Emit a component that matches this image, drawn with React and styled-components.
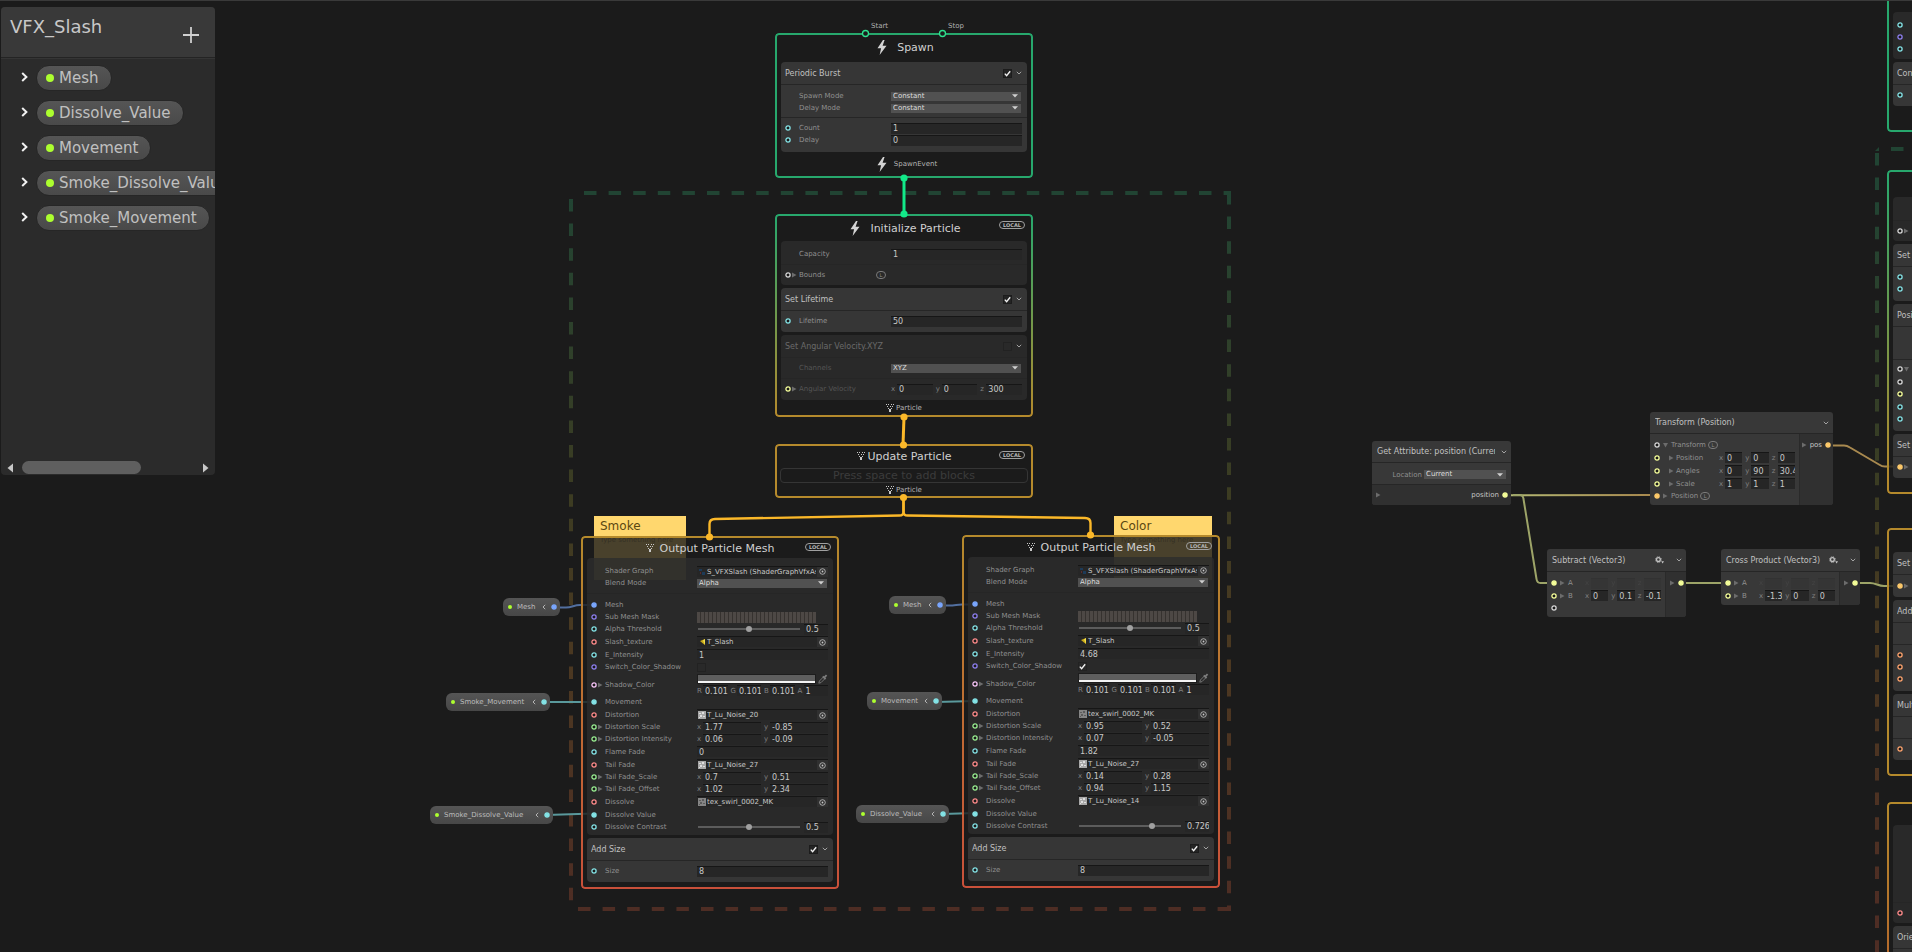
import React, { useId } from "react"
import styled, { createGlobalStyle, css } from "styled-components"

const GlobalStyle = createGlobalStyle`
* { box-sizing: border-box; }
body { margin: 0; background: #1b1b1b; }
button, input, select { font-family: inherit; margin: 0; border-radius: 0; }
`

const colors = {
    float: "#84e4e7",
    uint: "#8e7ff0",
    tex: "#ff8b8b",
    vec2: "#9aef92",
    vec3: "#f6ff9a",
    color: "#f9c6f9",
    mesh: "#7aa7ff",
    spaceable: "#ffcb6b",
    orange: "#ffa46e",
    none: "#d8d8d8",
}

const GREEN = "#27a86d"
const AMBER = "#b58a2c"

/* ---------- canvas ---------- */

const Canvas = styled.main`
position: relative;
height: 100vh;
overflow: hidden;
border-top: 1px solid #3a3a3a;
background: #1b1b1b;
color: #c4c4c4;
font-family: "DejaVu Sans", Verdana, sans-serif;
font-size: 7px;
`

const Layer = styled.svg`
position: absolute;
left: 0;
top: -1px;
width: 100%;
height: 100vh;
pointer-events: none;
`

const Note = styled.div`
position: absolute;
left: ${props => props.$x}px;
top: ${props => props.$y - 1}px;
width: ${props => props.$w}px;
height: 64px;
padding: 2px 6px;
overflow: hidden;
background: #ffd76e;
color: #5b4712;
white-space: nowrap;
`

const NoteTitle = styled.div`
font-size: 12px;
line-height: 17px;
`

const NoteText = styled.div`
font-size: 7px;
line-height: 10px;
color: #9a8240;
`

/* ---------- blackboard ---------- */

const Board = styled.aside`
position: absolute;
left: 1px;
top: 6px;
width: 214px;
height: 468px;
display: flex;
flex-direction: column;
overflow: hidden;
border-radius: 4px;
background: #2b2b2b;
`

const BoardHead = styled.header`
display: flex;
justify-content: space-between;
align-items: flex-start;
height: 51px;
padding: 8px 16px 0 9px;
background: #393939;
border-bottom: 1px solid #242424;
`

const BoardTitle = styled.h1`
margin: 0;
font-size: 18px;
line-height: 24px;
font-weight: normal;
color: #c8c8c8;
`

const IconButton = styled.button`
display: flex;
align-items: center;
justify-content: center;
flex: none;
padding: ${props => props.$pad || "0"};
border: 0;
background: none;
color: ${props => props.$color || "#c4c4c4"};
`

const BoardList = styled.ul`
flex: 1;
margin: 0;
padding: 6px 0 0 20px;
list-style: none;
display: flex;
flex-direction: column;
gap: 9px;
border-top: 1px solid #353535;
`

const BoardItem = styled.li`
display: flex;
align-items: center;
gap: 8px;
height: 26px;
white-space: nowrap;
`

const Pill = styled.button`
display: flex;
flex: none;
align-items: center;
gap: 5px;
height: 26px;
padding: 0 12px 0 9px;
border: 1px solid #262626;
border-radius: 13px;
background: linear-gradient(#555, #494949);
color: #c0c0c0;
font-size: 15px;
`

const Dot = styled.span`
flex: none;
width: ${props => props.$size}px;
height: ${props => props.$size}px;
border-radius: 50%;
background: #adff2f;
`

const BoardScroll = styled.div`
display: flex;
align-items: center;
height: 15px;
padding: 0 5px;
gap: 8px;
`

const ScrollTrack = styled.div`
flex: 1;
height: 13px;
`

const ScrollThumb = styled.div`
width: 69%;
height: 13px;
border-radius: 7px;
background: #5f5f5f;
`

/* ---------- contexts ---------- */

const ContextFrame = styled.section`
position: absolute;
left: ${props => props.$x}px;
top: ${props => props.$y - 1}px;
width: 258px;
padding: 2px 6px;
border-radius: 4px;
background: rgba(27, 27, 27, .8);
&::before {
    content: "";
    position: absolute;
    inset: 0;
    padding: 2px;
    border-radius: 4px;
    background: ${props => props.$line};
    mask: linear-gradient(#000 0 0) content-box exclude, linear-gradient(#000 0 0);
    pointer-events: none;
}
`

const ContextTitle = styled.h2`
display: flex;
align-items: center;
justify-content: center;
gap: ${props => props.$gap}px;
height: ${props => props.$h}px;
margin: 0 0 ${props => props.$space}px;
padding-left: ${props => props.$indent || 0}px;
font-size: 11px;
font-weight: normal;
color: #d0d0d0;
`

const Local = styled.span`
position: absolute;
right: 8px;
top: 7px;
height: 8px;
padding: 0 3px;
border: 1px solid #a0a0a0;
border-radius: 4px;
font-size: 5px;
line-height: 6px;
font-weight: bold;
color: #b8b8b8;
`

const Blocks = styled.div`
display: flex;
flex-direction: column;
gap: 3px;
padding-bottom: ${props => props.$end || 0}px;
`

const BlockBox = styled.div`
border-radius: 4px;
background: ${props => props.$on ? "#363636" : "rgba(45, 45, 45, .8)"};
`

const BlockHead = styled.header`
display: flex;
align-items: center;
gap: 4px;
height: 22px;
padding: 0 5px 0 4px;
font-size: 8px;
color: ${props => props.$dim ? "#6a6a6a" : "#c0c0c0"};
white-space: nowrap;
`

const BlockName = styled.span`
flex: 1;
min-width: 0;
overflow: ${props => props.$spill ? "visible" : "hidden"};
`

const Section = styled.div`
padding: ${props => props.$pad || "4px 0 5px"};
& + &, ${BlockHead} + & {
    border-top: 1px solid #262626;
}
`

const RowGrid = styled.div`
display: grid;
grid-template-columns: 18px 92px 131px;
align-items: center;
height: ${props => props.$h}px;
`

const Lead = styled.span`
display: flex;
align-items: center;
gap: 1px;
padding-left: 4px;
`

const RowLabel = styled.label`
display: flex;
justify-content: space-between;
align-items: center;
padding-right: 5px;
font-size: 7px;
line-height: 10px;
color: ${props => props.$dim ? "#555" : "#909090"};
white-space: nowrap;
`

const Space = styled.span`
width: 10px;
height: 8px;
border: 1px solid #7a7a7a;
border-radius: 4px;
font-size: 5px;
line-height: 6px;
text-align: center;
color: #8a8a8a;
`

const ContextFoot = styled.footer`
display: flex;
align-items: center;
justify-content: center;
gap: ${props => props.$gap}px;
height: ${props => props.$h}px;
padding-left: ${props => props.$indent || 0}px;
color: #b4b4b4;
`

const DropHint = styled.div`
margin: 0 -1px;
height: 15px;
border: 1px solid #353535;
border-radius: 4px;
text-align: center;
font-size: 11px;
line-height: 14px;
color: #3c3c3c;
`

/* ---------- fields ---------- */

const fieldBase = css`
border: 0;
border-top: 1px solid #161616;
background: #262626;
color: #c8c8c8;
outline: none;
`

const TextInput = styled.input`
${fieldBase}
flex: 1;
width: 100%;
min-width: 0;
height: 11px;
padding: 0 0 0 2px;
font-size: 8px;
line-height: 10px;
`

const SelectWrap = styled.span`
display: grid;
align-items: center;
width: ${props => props.$w || "130px"};
& > * { grid-area: 1 / 1; }
& > svg { justify-self: end; margin-right: 3px; pointer-events: none; }
`

const SelectBox = styled.select`
appearance: none;
width: 100%;
height: 9px;
padding: 0 2px;
border: 0;
background: #515151;
color: #dcdcdc;
font-size: 7px;
line-height: 9px;
`

const ObjectBox = styled.span`
${fieldBase}
display: flex;
align-items: center;
gap: 1px;
height: 11px;
padding-left: 1px;
`

const ObjectName = styled.input`
flex: 1;
min-width: 0;
height: 10px;
padding: 0;
border: 0;
background: none;
color: #c8c8c8;
font-size: 7px;
`

const Picker = styled.button`
display: flex;
align-items: center;
justify-content: center;
width: 11px;
height: 10px;
padding: 0;
border: 0;
background: #303030;
color: #c8c8c8;
`

const Mask = styled.span`
display: block;
width: 119px;
height: 11px;
background: repeating-linear-gradient(90deg, #4d4845 0 3px, #36322f 3px 4px);
`

const Vector = styled.span`
display: flex;
gap: 3px;
`

const Axis = styled.label`
display: flex;
flex: 1;
align-items: center;
min-width: 0;
gap: 1px;
color: #808080;
`

const AxisName = styled.span`
flex: none;
min-width: 5px;
`

const SliderBox = styled.span`
display: flex;
align-items: center;
gap: 4px;
padding-left: 1px;
`

const Range = styled.input`
appearance: none;
width: 102px;
height: 8px;
background: linear-gradient(#5c5c5c, #5c5c5c) center / 100% 2px no-repeat;
&::-webkit-slider-thumb {
    appearance: none;
    width: 6px;
    height: 6px;
    border-radius: 50%;
    background: #a0a0a0;
}
`

const CheckWrap = styled.span`
display: grid;
flex: none;
width: 9px;
height: 9px;
place-items: center;
& > * { grid-area: 1 / 1; }
& > svg { pointer-events: none; }
`

const CheckBox = styled.input`
appearance: none;
width: 9px;
height: 9px;
border: 1px solid ${props => props.$dim ? "#222" : "#1c1c1c"};
background: ${props => props.$dim ? "#292929" : "#242424"};
`

const ColorBox = styled.span`
display: flex;
flex-direction: column;
`

const ColorLine = styled.span`
display: flex;
align-items: center;
gap: 2px;
height: 12px;
`

const Swatch = styled.button`
width: 119px;
height: 10px;
padding: 0;
border: 1px solid #1d1d1d;
background: linear-gradient(#5e5e5e 0 6px, #f4f4f4 6px);
`

/* ---------- operators and parameters ---------- */

const OperatorFrame = styled.section`
position: absolute;
left: ${props => props.$x}px;
top: ${props => props.$y - 1}px;
width: ${props => props.$w}px;
overflow: hidden;
border-radius: 3px;
background: #383838;
`

const OperatorHead = styled.header`
display: flex;
align-items: center;
gap: ${props => props.$gear ? 12 : 6}px;
height: ${props => props.$gear ? 23 : 22}px;
padding: 0 4px 0 5px;
font-size: 8px;
color: #c0c0c0;
white-space: nowrap;
border-bottom: 1px solid #262626;
`

const OperatorBody = styled.div`
display: flex;
`

const OperatorIn = styled.div`
flex: 1;
padding: 5px 0 3px;
`

const OperatorOut = styled.div`
width: ${props => props.$w}px;
padding: 5px 1px 0 0;
border-left: 1px solid #2a2a2a;
background: #303030;
`

const OutRow = styled.div`
display: flex;
align-items: center;
justify-content: flex-end;
gap: 3px;
height: 12px;
padding-right: 1px;
color: #c4c4c4;
`

const InRow = styled.div`
display: flex;
align-items: center;
gap: 3px;
height: ${props => props.$h || 12}px;
padding: 0 4px;
color: #909090;
`

const InLabel = styled.span`
flex: 1;
display: flex;
align-items: center;
gap: 2px;
margin-left: ${props => props.$indent || 0}px;
`

const InFields = styled.span`
display: flex;
gap: 3px;
width: 76px;
opacity: ${props => props.$faint ? .15 : 1};
`

const SettingRow = styled.div`
display: flex;
align-items: center;
justify-content: flex-end;
gap: 2px;
height: 21px;
padding: 2px 5px 0;
color: #909090;
`

const BottomRow = styled.div`
display: flex;
align-items: center;
justify-content: space-between;
height: 21px;
padding: 0 2px 0 4px;
border-top: 1px solid #262626;
background: #303030;
`

const ParamNode = styled.div`
position: absolute;
left: ${props => props.$x}px;
top: ${props => props.$y - 1}px;
width: ${props => props.$w}px;
height: 18px;
display: flex;
align-items: center;
gap: 5px;
padding: 0 3px 0 5px;
border-radius: 6px;
background: linear-gradient(#555, #474747);
color: #bcbcbc;
white-space: nowrap;
`

const ParamName = styled.span`
flex: 1;
`

const Hook = styled.span`
position: absolute;
left: ${props => props.$x}px;
top: 20px;
line-height: 10px;
color: #b0b0b0;
`

/* ---------- icons ---------- */

const Port = ({ type, filled }) => (
    <svg width="6" height="6" viewBox="0 0 6 6">
        <circle cx="3" cy="3" r="2.1" fill={filled ? colors[type] : "#1a1a1a"} stroke={colors[type]} strokeWidth="1.3" />
    </svg>
)

const Triangle = ({ open }) => (
    <svg width="5" height="6" viewBox="0 0 5 6">
        <path d={open ? "M0 1h5L2.5 5.5z" : "M0 .5v5L4.500 3z"} fill="#6c6c6c" />
    </svg>
)

const Bolt = () => (
    <svg width="10" height="15" viewBox="0 0 10 15">
        <path d="M6 0 .5 8.2h3.6L2.6 15 9.5 5.8H5.6L7.6 0z" fill="#d4d4d4" />
    </svg>
)

const Particles = () => (
    <svg width="8" height="8" viewBox="0 0 8 8" fill="#c8c8c8">
        <path d="M0 0h1v1H0zM2 0h1v1H2zM5 0h1v1H5zM7 0h1v1H7zM1 2h1v1H1zM4 2h1v1H4zM6 2h1v1H6zM2 4h1v1H2zM5 4h1v1H5zM3 5h2v3H3z" />
    </svg>
)

const ChevronDown = () => (
    <svg width="6" height="4" viewBox="0 0 6 4">
        <path d="M.8.8 3 3 5.2.8" fill="none" stroke="#b0b0b0" strokeWidth=".9" />
    </svg>
)

const ChevronLeft = () => (
    <svg width="4" height="6" viewBox="0 0 4 6">
        <path d="M3.2.8 1 3l2.2 2.2" fill="none" stroke="#c0c0c0" strokeWidth=".9" />
    </svg>
)

const ChevronRight = () => (
    <svg width="7" height="10" viewBox="0 0 7 10">
        <path d="M1.2 1 5.4 5 1.2 9" fill="none" stroke="#f0f0f0" strokeWidth="2" />
    </svg>
)

const Check = () => (
    <svg width="7" height="7" viewBox="0 0 7 7">
        <path d="M.8 3.6 2.6 5.6 6.2 1.2" fill="none" stroke="#f0f0f0" strokeWidth="1.4" />
    </svg>
)

const Caret = () => (
    <svg width="6" height="4" viewBox="0 0 6 4">
        <path d="M0 .3h6L3 3.6z" fill="#d0d0d0" />
    </svg>
)

const Target = () => (
    <svg width="7" height="7" viewBox="0 0 7 7">
        <circle cx="3.5" cy="3.5" r="2.8" fill="none" stroke="currentColor" strokeWidth=".8" />
        <circle cx="3.5" cy="3.5" r=".9" fill="currentColor" />
    </svg>
)

const Gear = () => (
    <svg width="9" height="8" viewBox="0 0 9 8">
        <circle cx="3.4" cy="3.6" r="1.9" fill="none" stroke="#c4c4c4" strokeWidth="1.3" />
        <circle cx="3.4" cy="3.6" r="2.9" fill="none" stroke="#c4c4c4" strokeWidth=".9" strokeDasharray="1.14 1.14" />
        <path d="M6.2 5.2H9L7.6 7.4z" fill="#c4c4c4" />
    </svg>
)

const Dropper = () => (
    <svg width="10" height="10" viewBox="0 0 10 10">
        <path d="M.8 9.2 1.4 7 5.4 3 7 4.6l-4 4z" fill="none" stroke="#7c7c7c" strokeWidth=".9" />
        <path d="M4.8 2.4 7.6 5.2M6.2 3.6 8.6 1.2" stroke="#7c7c7c" strokeWidth="1.8" />
    </svg>
)

const Thumb = ({ type }) => {
    if (type === "slash") {
        return (
            <svg width="8" height="8" viewBox="0 0 8 8">
                <path d="M2 3 7 1v6L5 5.6z" fill="#c9a91a" />
                <path d="M5 2.5 7 1v6z" fill="#f2e04c" />
            </svg>
        )
    }
    if (type === "graph") {
        return (
            <svg width="8" height="8" viewBox="0 0 8 8">
                <path d="M1 1h3v2H1zM4 4h3v3H4z" fill="#1d3a58" />
                <path d="M2 4h1v2H2z" fill="#5a2a30" />
            </svg>
        )
    }
    return (
        <svg width="8" height="8" viewBox="0 0 8 8">
            <path d="M0 0h8v8H0z" fill={type === "swirl" ? "#858585" : "#a8a8a8"} />
            <path d="M1 2h2v1H1zM4 1h2v2H4zM2 4h2v2H2zM5 5h2v1H5zM1 6h1v1H1z" fill={type === "swirl" ? "#5c5c5c" : "#dedede"} />
        </svg>
    )
}

/* ---------- field components ---------- */

const Select = ({ id, value, w, label }) => (
    <SelectWrap $w={w}>
        <SelectBox id={id} aria-label={label} defaultValue={value}>
            <option>{value}</option>
        </SelectBox>
        <Caret />
    </SelectWrap>
)

const Checkbox = ({ id, label, checked, dim }) => (
    <CheckWrap>
        <CheckBox id={id} aria-label={label} type="checkbox" defaultChecked={checked} $dim={dim} />
        {checked && <Check />}
    </CheckWrap>
)

const Axes = ({ names, values }) => values.map((v, i) => (
    <Axis key={i}>
        <AxisName>{names[i]}</AxisName>
        <TextInput defaultValue={v} />
    </Axis>
))

const Field = ({ row, id }) => {
    switch (row.kind) {
        case "select":
            return <Select id={id} value={row.value} />
        case "number":
            return <TextInput id={id} defaultValue={row.value} />
        case "object":
            return (
                <ObjectBox>
                    <Thumb type={row.thumb} />
                    <ObjectName id={id} readOnly defaultValue={row.value} />
                    <Picker aria-label={`Pick ${row.label}`}><Target /></Picker>
                </ObjectBox>
            )
        case "vector":
            return <Vector><Axes names="xyz" values={row.value} /></Vector>
        case "mask":
            return <Mask />
        case "bool":
            return <Checkbox id={id} checked={row.value} dim />
        case "slider":
            return (
                <SliderBox>
                    <Range id={id} type="range" min="0" max="1" step="0.001" defaultValue={row.value} />
                    <TextInput aria-label={`${row.label} value`} defaultValue={row.value} />
                </SliderBox>
            )
        case "color":
            return (
                <ColorBox>
                    <ColorLine>
                        <Swatch id={id} aria-label={row.label} />
                        <IconButton aria-label="Pick color"><Dropper /></IconButton>
                    </ColorLine>
                    <Vector><Axes names="RGBA" values={row.value} /></Vector>
                </ColorBox>
            )
        default:
            return null
    }
}

const Row = ({ row, dim }) => {
    const id = useId()
    return (
        <RowGrid $h={row.h || 12}>
            <Lead>
                {row.port && <Port type={row.port} filled={row.filled} />}
                {row.fold && <Triangle open={row.fold === "open"} />}
            </Lead>
            <RowLabel htmlFor={row.kind ? id : undefined} $dim={dim}>
                {row.label}
                {row.space && <Space>L</Space>}
            </RowLabel>
            <Field row={row} id={id} />
        </RowGrid>
    )
}

const Block = ({ name, on, dim, sections }) => (
    <BlockBox $on={on}>
        {name && (
            <BlockHead $dim={dim}>
                <BlockName>{name}</BlockName>
                <Checkbox label={`Enable ${name}`} checked={!dim} dim={dim} />
                <IconButton aria-label={`Collapse ${name}`}><ChevronDown /></IconButton>
            </BlockHead>
        )}
        {sections.map((s, i) => (
            <Section key={i} $pad={s.pad}>
                {s.rows.map((row, j) => <Row key={j} row={row} dim={dim} />)}
            </Section>
        ))}
    </BlockBox>
)

/* ---------- graph data ---------- */

const spawnBlocks = [
    {
        name: "Periodic Burst", on: true, sections: [
            {
                pad: "5px 0 3px", rows: [
                    { label: "Spawn Mode", kind: "select", value: "Constant" },
                    { label: "Delay Mode", kind: "select", value: "Constant" },
                ]
            },
            {
                pad: "4px 0 6px", rows: [
                    { label: "Count", kind: "number", port: "float", value: "1" },
                    { label: "Delay", kind: "number", port: "float", value: "0" },
                ]
            },
        ]
    },
]

const initBlocks = [
    {
        sections: [
            { pad: "7px 0 4px", rows: [{ label: "Capacity", kind: "number", value: "1" }] },
            { pad: "4px 0 4px", rows: [{ label: "Bounds", port: "none", fold: true, space: true }] },
        ]
    },
    {
        name: "Set Lifetime", on: true, sections: [
            { rows: [{ label: "Lifetime", kind: "number", port: "float", value: "50" }] },
        ]
    },
    {
        name: "Set Angular Velocity.XYZ", dim: true, sections: [
            { pad: "4px 0 4px", rows: [{ label: "Channels", kind: "select", value: "XYZ" }] },
            { rows: [{ label: "Angular Velocity", kind: "vector", port: "vec3", fold: true, value: ["0", "0", "300"] }] },
        ]
    },
]

const outputBlocks = v => [
    {
        sections: [
            {
                pad: "7px 0 4px", rows: [
                    { label: "Shader Graph", kind: "object", thumb: "graph", value: "S_VFXSlash (ShaderGraphVfxAsset)" },
                    { label: "Blend Mode", kind: "select", value: "Alpha" },
                ]
            },
            {
                pad: "4px 0 2px", rows: [
                    { h: 13, label: "Mesh", port: "mesh", filled: true },
                    { label: "Sub Mesh Mask", kind: "mask", port: "uint" },
                    { label: "Alpha Threshold", kind: "slider", port: "float", value: "0.5" },
                    { h: 13, label: "Slash_texture", kind: "object", port: "tex", thumb: "slash", value: "T_Slash" },
                    { h: 13, label: "E_Intensity", kind: "number", port: "float", value: v.intensity },
                    { label: "Switch_Color_Shadow", kind: "bool", port: "uint", value: v.shadow },
                    { h: 22, label: "Shadow_Color", kind: "color", port: "color", fold: true, value: ["0.101", "0.101", "0.101", "1"] },
                    { h: 13, label: "Movement", port: "float", filled: true },
                    { h: 13, label: "Distortion", kind: "object", port: "tex", thumb: v.distortionThumb, value: v.distortion },
                    { label: "Distortion Scale", kind: "vector", port: "vec2", fold: true, value: v.scale },
                    { label: "Distortion Intensity", kind: "vector", port: "vec2", fold: true, value: v.distIntensity },
                    { h: 13, label: "Flame Fade", kind: "number", port: "float", value: v.flame },
                    { h: 13, label: "Tail Fade", kind: "object", port: "tex", thumb: "noise", value: "T_Lu_Noise_27" },
                    { label: "Tail Fade_Scale", kind: "vector", port: "vec2", fold: true, value: v.tailScale },
                    { label: "Tail Fade_Offset", kind: "vector", port: "vec2", fold: true, value: v.tailOffset },
                    { h: 13, label: "Dissolve", kind: "object", port: "tex", thumb: v.dissolveThumb, value: v.dissolve },
                    { h: 13, label: "Dissolve Value", port: "float", filled: true },
                    { label: "Dissolve Contrast", kind: "slider", port: "float", value: v.contrast },
                ]
            },
        ]
    },
    {
        name: "Add Size", on: true, sections: [
            { rows: [{ label: "Size", kind: "number", port: "float", value: "8" }] },
        ]
    },
]

const smokeOutput = outputBlocks({
    intensity: "1", shadow: false,
    distortion: "T_Lu_Noise_20", distortionThumb: "noise",
    scale: ["1.77", "-0.85"], distIntensity: ["0.06", "-0.09"],
    flame: "0", tailScale: ["0.7", "0.51"], tailOffset: ["1.02", "2.34"],
    dissolve: "tex_swirl_0002_MK", dissolveThumb: "swirl", contrast: "0.5",
})

const colorOutput = outputBlocks({
    intensity: "4.68", shadow: true,
    distortion: "tex_swirl_0002_MK", distortionThumb: "swirl",
    scale: ["0.95", "0.52"], distIntensity: ["0.07", "-0.05"],
    flame: "1.82", tailScale: ["0.14", "0.28"], tailOffset: ["0.94", "1.15"],
    dissolve: "T_Lu_Noise_14", dissolveThumb: "noise", contrast: "0.726",
})

const ports = (...types) => types.map(port => ({ port }))

// the second system runs off the right edge of the view
const sideContexts = [
    {
        y: -30, line: GREEN, title: 40, end: 24, blocks: [
            { sections: [{ pad: "7px 0 4px", rows: ports("float", "uint", "float") }] },
            { name: "Constant", on: true, sections: [{ rows: ports("float") }] },
        ]
    },
    {
        y: 170, line: `linear-gradient(${GREEN}, ${AMBER} 95%)`, title: 25, end: 14, blocks: [
            {
                sections: [
                    { pad: "7px 0 4px", rows: [{}] },
                    { pad: "4px 0 4px", rows: [{ port: "none", fold: true }] },
                ]
            },
            { name: "Set Lifetime", on: true, sections: [{ pad: "4px 0 6px", rows: ports("float", "float") }] },
            {
                name: "Position", on: true, sections: [
                    { pad: "5px 0 3px", rows: [{}, {}] },
                    {
                        pad: "3px 0 6px", rows: [
                            { port: "none", fold: "open" }, { h: 13, port: "none" },
                            { port: "vec3" }, { h: 13, port: "float" }, { port: "float" },
                        ]
                    },
                ]
            },
            { name: "Set Position", on: true, sections: [{ rows: [{ port: "spaceable", filled: true, fold: true }] }] },
        ]
    },
    {
        y: 528, line: AMBER, title: 22, end: 14, blocks: [
            { name: "Set Velocity", on: true, sections: [{ pad: "5px 0 5px", rows: [{ port: "spaceable", filled: true, fold: true }] }] },
            {
                name: "Add", on: true, sections: [
                    { pad: "5px 0 4px", rows: [{}] },
                    { pad: "4px 0 6px", rows: ports("orange", "orange", "orange") },
                ]
            },
            {
                name: "Multiply", on: true, sections: [
                    { pad: "5px 0 4px", rows: [{}] },
                    { pad: "4px 0 5px", rows: ports("orange") },
                ]
            },
        ]
    },
    {
        y: 802, line: `linear-gradient(${AMBER}, #b5642c)`, title: 21, end: 14, blocks: [
            {
                sections: [
                    { pad: "6px 0 4px", rows: [{ h: 67 }] },
                    { pad: "4px 0 4px", rows: ports("tex") },
                ]
            },
            { name: "Orient", on: true, sections: [{ rows: ports("float") }] },
        ]
    },
]

const params = [
    { name: "Mesh", x: 503, y: 598, w: 57, type: "mesh" },
    { name: "Smoke_Movement", x: 446, y: 693, w: 104, type: "float" },
    { name: "Smoke_Dissolve_Value", x: 430, y: 806, w: 123, type: "float" },
    { name: "Mesh", x: 889, y: 596, w: 57, type: "mesh" },
    { name: "Movement", x: 867, y: 692, w: 75, type: "float" },
    { name: "Dissolve_Value", x: 856, y: 805, w: 93, type: "float" },
]

const properties = ["Mesh", "Dissolve_Value", "Movement", "Smoke_Dissolve_Value", "Smoke_Movement"]

/* ---------- page parts ---------- */

const Blackboard = () => (
    <Board>
        <BoardHead>
            <BoardTitle>VFX_Slash</BoardTitle>
            <IconButton aria-label="Add property" $pad="12px 0 0">
                <svg width="16" height="16" viewBox="0 0 16 16">
                    <path d="M8 0v16M0 8h16" stroke="#d0d0d0" strokeWidth="1.8" />
                </svg>
            </IconButton>
        </BoardHead>
        <BoardList>
            {properties.map(name => (
                <BoardItem key={name}>
                    <IconButton aria-label={`Expand ${name}`} $pad="0 0 2px"><ChevronRight /></IconButton>
                    <Pill><Dot $size={8} />{name}</Pill>
                </BoardItem>
            ))}
        </BoardList>
        <BoardScroll>
            <IconButton aria-label="Scroll left">
                <svg width="8" height="10" viewBox="0 0 8 10"><path d="M7 .5v9L1.5 5z" fill="#c8c8c8" /></svg>
            </IconButton>
            <ScrollTrack><ScrollThumb /></ScrollTrack>
            <IconButton aria-label="Scroll right">
                <svg width="8" height="10" viewBox="0 0 8 10"><path d="M1 .5v9L6.5 5z" fill="#c8c8c8" /></svg>
            </IconButton>
        </BoardScroll>
    </Board>
)

const Frames = () => (
    <Layer>
        <defs>
            <linearGradient id="frame" gradientUnits="userSpaceOnUse" x1="0" y1="193" x2="0" y2="909">
                <stop offset="0" stopColor="#214433" />
                <stop offset=".42" stopColor="#3c3c22" />
                <stop offset=".65" stopColor="#4b3821" />
                <stop offset="1" stopColor="#4e2d24" />
            </linearGradient>
        </defs>
        <g fill="none" strokeWidth="4" strokeDasharray="12.5 12.1">
            <path d="M584 193H1231" stroke="#214433" />
            <path d="M578 909H1231" stroke="#4e2d24" />
            <path d="M571 199V903" stroke="url(#frame)" />
            <path d="M1229 192V911" stroke="url(#frame)" />
            <path d="M1877 153V952" stroke="url(#frame)" />
            <path d="M1891 149H1912" stroke="#214433" />
        </g>
        <path d="M1875 151l4-4v4z" fill="#214433" />
    </Layer>
)

const Edges = () => (
    <Layer>
        <defs>
            <linearGradient id="spaceEdge" gradientUnits="userSpaceOnUse" x1="1508" y1="0" x2="1650" y2="0">
                <stop offset="0" stopColor="#b3b873" />
                <stop offset="1" stopColor="#a8894f" />
            </linearGradient>
        </defs>
        <g fill="none" strokeWidth="2">
            <path d="M554 607.5h12c6 0 8-2.500 14-2.500h14" stroke="#526f9f" />
            <path d="M941 605.500h8c6 0 8-1 13-1h13" stroke="#526f9f" />
            <path d="M544 702H594M546 815L594 813.500M936 702L975 701M943 814L975 813" stroke="#5a999c" />
            <path d="M1506 495.200L1654 495" stroke="url(#spaceEdge)" />
            <path d="M1513 495h7q3 0 3.500 4l13 80q.5 4 4 4h14" stroke="#9da468" />
            <path d="M1681 583H1726" stroke="#9da468" />
            <path d="M1855 583h15c6 0 8 3 14 3h16" stroke="#9da468" />
            <path d="M1829 445.500h15q3 0 6 2l29 17q3 2 6 2h14" stroke="#a8894f" />
        </g>
    </Layer>
)

const Flow = () => (
    <Layer>
        <g fill="none" strokeWidth="3">
            <path d="M904 178V214" stroke="#12e989" />
            <path d="M904 417L903 445" stroke="#fbb829" />
            <path d="M903.500 498V512q0 3.500-4 3.500L715 519q-5.500 0-5.500 5V536" stroke="#fbb829" strokeWidth="2.400" />
            <path d="M903.500 498V512q0 3.500 4 3.500L1085 518q5.500 0 5.500 5V535" stroke="#fbb829" strokeWidth="2.400" />
        </g>
        <g fill="#12e989">
            <circle cx="904" cy="178" r="3.600" />
            <circle cx="904" cy="214" r="3.600" />
        </g>
        <g fill="#fbb829">
            <circle cx="904" cy="417" r="3.600" />
            <circle cx="903.500" cy="445" r="3.600" />
            <circle cx="903.500" cy="497.500" r="3.600" />
            <circle cx="709.500" cy="537" r="3.600" />
            <circle cx="1090.500" cy="535" r="3.600" />
        </g>
        <g fill="#1b1b1b" stroke="#2ee28f" strokeWidth="1.300">
            <circle cx="865.500" cy="33.500" r="3" />
            <circle cx="942.500" cy="33.500" r="3" />
        </g>
    </Layer>
)

const OperatorTitle = ({ name, gear }) => (
    <OperatorHead $gear={gear}>
        <BlockName $spill={gear}>{name}</BlockName>
        {gear && <IconButton aria-label={`${name} settings`}><Gear /></IconButton>}
        <IconButton aria-label={`Collapse ${name}`}><ChevronDown /></IconButton>
    </OperatorHead>
)

const VectorOperator = ({ x, name, value, extra }) => (
    <OperatorFrame $x={x} $y={549} $w={139}>
        <OperatorTitle name={name} gear />
        <OperatorBody>
            <OperatorIn>
                <InRow>
                    <Port type="vec3" filled /><Triangle />
                    <InLabel>A</InLabel>
                    <InFields $faint><Axes names="xyz" values={["", "", ""]} /></InFields>
                </InRow>
                <InRow $h={13}>
                    <Port type="vec3" /><Triangle />
                    <InLabel>B</InLabel>
                    <InFields><Axes names="xyz" values={value} /></InFields>
                </InRow>
                {extra && <InRow><Port type="none" /></InRow>}
            </OperatorIn>
            <OperatorOut $w={21}>
                <OutRow><Triangle /><Port type="vec3" filled /></OutRow>
            </OperatorOut>
        </OperatorBody>
    </OperatorFrame>
)

const App = () => {
    return (
        <>
            <GlobalStyle />
            <Canvas>
                <Frames />
                <Note $x={594} $y={516} $w={92}>
                    <NoteTitle>Smoke</NoteTitle>
                    <NoteText>Type something here</NoteText>
                </Note>
                <Note $x={1114} $y={516} $w={98}>
                    <NoteTitle>Color</NoteTitle>
                    <NoteText>Type something here</NoteText>
                </Note>
                <Edges />

                <Hook $x={871}>Start</Hook>
                <Hook $x={948}>Stop</Hook>
                <ContextFrame $x={775} $y={33} $line={GREEN}>
                    <ContextTitle $h={24} $gap={10} $space={3} $indent={3}><Bolt />Spawn</ContextTitle>
                    <Blocks>{spawnBlocks.map((b, i) => <Block key={i} {...b} />)}</Blocks>
                    <ContextFoot $h={24} $gap={7} $indent={6}><Bolt />SpawnEvent</ContextFoot>
                </ContextFrame>

                <ContextFrame $x={775} $y={214} $line={`linear-gradient(${GREEN}, ${AMBER})`}>
                    <ContextTitle $h={24} $gap={10} $space={1} $indent={3}><Bolt />Initialize Particle</ContextTitle>
                    <Local>LOCAL</Local>
                    <Blocks>{initBlocks.map((b, i) => <Block key={i} {...b} />)}</Blocks>
                    <ContextFoot $h={15} $gap={2}><Particles />Particle</ContextFoot>
                </ContextFrame>

                <ContextFrame $x={775} $y={444} $line={AMBER}>
                    <ContextTitle $h={20} $gap={3} $space={2}><Particles />Update Particle</ContextTitle>
                    <Local>LOCAL</Local>
                    <DropHint>Press space to add blocks</DropHint>
                    <ContextFoot $h={13} $gap={2}><Particles />Particle</ContextFoot>
                </ContextFrame>

                <ContextFrame $x={581} $y={536} $line={`linear-gradient(${AMBER}, #c9503a)`}>
                    <ContextTitle $h={20} $gap={6} $space={0}><Particles />Output Particle Mesh</ContextTitle>
                    <Local>LOCAL</Local>
                    <Blocks $end={5}>{smokeOutput.map((b, i) => <Block key={i} {...b} />)}</Blocks>
                </ContextFrame>

                <ContextFrame $x={962} $y={535} $line={`linear-gradient(${AMBER}, #c9503a)`}>
                    <ContextTitle $h={20} $gap={6} $space={0}><Particles />Output Particle Mesh</ContextTitle>
                    <Local>LOCAL</Local>
                    <Blocks $end={5}>{colorOutput.map((b, i) => <Block key={i} {...b} />)}</Blocks>
                </ContextFrame>

                {sideContexts.map((c, i) => (
                    <ContextFrame key={i} $x={1887} $y={c.y} $line={c.line}>
                        <ContextTitle $h={c.title} $gap={0} $space={0} />
                        <Blocks $end={c.end}>{c.blocks.map((b, j) => <Block key={j} {...b} />)}</Blocks>
                    </ContextFrame>
                ))}

                {params.map((p, i) => (
                    <ParamNode key={i} $x={p.x} $y={p.y} $w={p.w}>
                        <Dot $size={4} />
                        <ParamName>{p.name}</ParamName>
                        <ChevronLeft />
                        <Port type={p.type} filled />
                    </ParamNode>
                ))}

                <OperatorFrame $x={1372} $y={441} $w={139}>
                    <OperatorTitle name="Get Attribute: position (Current)" />
                    <SettingRow>
                        Location
                        <Select w="82px" value="Current" label="Location" />
                    </SettingRow>
                    <BottomRow>
                        <Triangle />
                        <OutRow>position<Port type="vec3" filled /></OutRow>
                    </BottomRow>
                </OperatorFrame>

                <OperatorFrame $x={1650} $y={412} $w={183}>
                    <OperatorTitle name="Transform (Position)" />
                    <OperatorBody>
                        <OperatorIn>
                            <InRow>
                                <Port type="none" /><Triangle open />
                                <InLabel>Transform<Space>L</Space></InLabel>
                            </InRow>
                            {[["Position", "0", "0", "0"], ["Angles", "0", "90", "30.4"], ["Scale", "1", "1", "1"]].map(([name, ...v]) => (
                                <InRow key={name} $h={13}>
                                    <Port type="vec3" />
                                    <InLabel $indent={6}><Triangle />{name}</InLabel>
                                    <InFields><Axes names="xyz" values={v} /></InFields>
                                </InRow>
                            ))}
                            <InRow>
                                <Port type="spaceable" filled /><Triangle />
                                <InLabel>Position<Space>L</Space></InLabel>
                            </InRow>
                        </OperatorIn>
                        <OperatorOut $w={34}>
                            <OutRow><Triangle />pos<Port type="spaceable" filled /></OutRow>
                        </OperatorOut>
                    </OperatorBody>
                </OperatorFrame>

                <VectorOperator x={1547} name="Subtract (Vector3)" value={["0", "0.1", "-0.1"]} extra />
                <VectorOperator x={1721} name="Cross Product (Vector3)" value={["-1.3", "0", "0"]} />

                <Flow />
                <Blackboard />
            </Canvas>
        </>
    )
}

export default App
